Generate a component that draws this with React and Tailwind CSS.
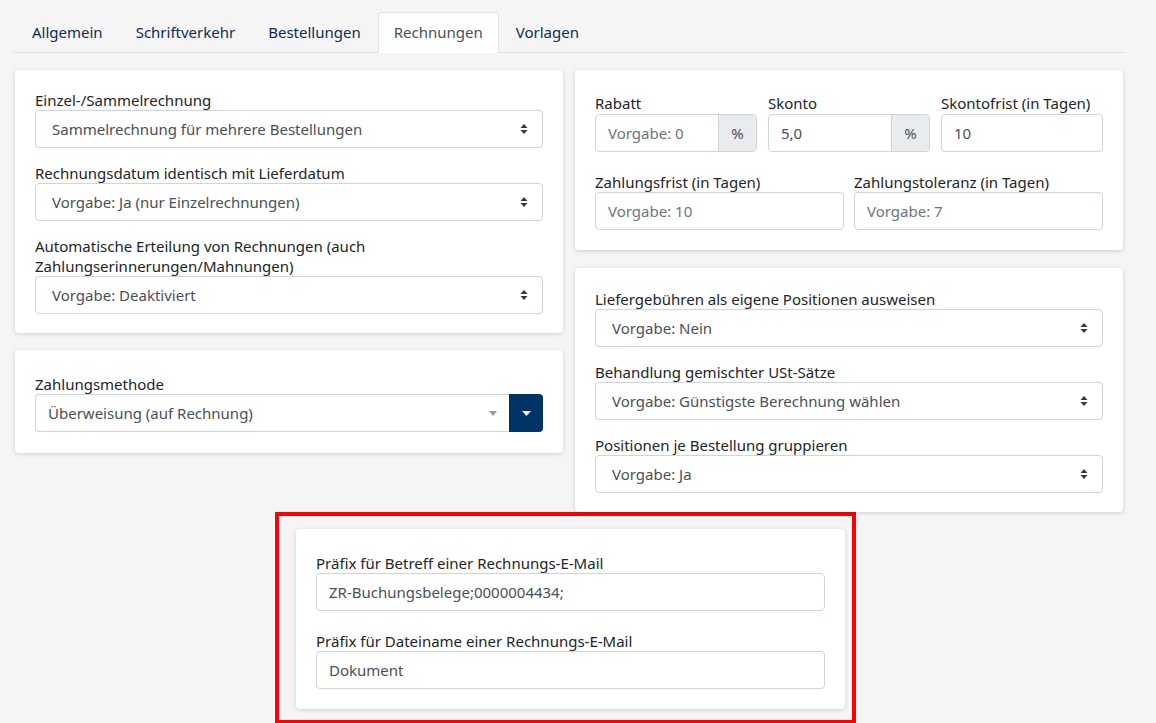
import React from "react";

const font = { fontFamily: '"Noto Sans", "Open Sans", sans-serif' };

function Chevrons() {
  return (
    <svg width="8" height="12" viewBox="0 0 8 12" className="shrink-0">
      <path d="M4 1 L7.5 5 L0.5 5 Z" fill="#343a40" />
      <path d="M4 11 L7.5 7 L0.5 7 Z" fill="#343a40" />
    </svg>
  );
}

function Field({ label, children, className = "" }) {
  return (
    <div className={className}>
      <div className="text-[15px] leading-[20px] text-[#212529]">{label}</div>
      {children}
    </div>
  );
}

function Select({ value }) {
  return (
    <div className="h-[38px] flex items-center justify-between border border-[#ced4da] rounded-[4px] bg-white pl-[16px] pr-[14px] text-[15px] text-[#495057]">
      <span>{value}</span>
      <Chevrons />
    </div>
  );
}

function Input({ value, placeholder, className = "" }) {
  return (
    <div className={"h-[38px] flex items-center border border-[#ced4da] rounded-[4px] bg-white px-[12px] text-[15px] " + className}>
      {value ? <span className="text-[#495057]">{value}</span> : <span className="text-[#6c757d]">{placeholder}</span>}
    </div>
  );
}

function PercentInput({ value, placeholder }) {
  return (
    <div className="h-[38px] mt-[1px] flex border border-[#ced4da] rounded-[4px] bg-white text-[15px] overflow-hidden">
      <div className="flex-1 flex items-center px-[12px]">
        {value ? <span className="text-[#495057]">{value}</span> : <span className="text-[#6c757d]">{placeholder}</span>}
      </div>
      <div className="w-[38px] flex items-center justify-center bg-[#e9ecef] border-l border-[#ced4da] text-[#495057]">%</div>
    </div>
  );
}

function Card({ children, className = "" }) {
  return (
    <div className={"bg-white rounded-[4px] shadow-[0_1px_4px_rgba(0,0,0,0.16)] " + className}>
      {children}
    </div>
  );
}

export default function App() {
  const tabs = ["Allgemein", "Schriftverkehr", "Bestellungen", "Rechnungen", "Vorlagen"];

  return (
    <div className="min-h-screen bg-[#f5f5f5] pl-[13px] pr-[31px] pt-[12px]" style={font}>
      {/* Reiter */}
      <div className="flex border-b border-[#dee2e6] pl-[3px] gap-[1px]">
        {tabs.map((t) =>
          t === "Rechnungen" ? (
            <div
              key={t}
              className="h-[41px] -mb-px flex items-center px-[15px] bg-white border border-[#dee2e6] border-b-white rounded-t-[4px] text-[15px] text-[#495057]"
            >
              {t}
            </div>
          ) : (
            <div key={t} className="h-[41px] -mb-px flex items-center px-[15px] border border-transparent text-[15px] text-[#0b2d5b]">
              {t}
            </div>
          )
        )}
      </div>

      {/* Karten */}
      <div className="grid grid-cols-2 gap-x-[12px] px-[2px] mt-[17px] items-start">
        <div className="flex flex-col gap-[17px]">
          <Card className="px-[20px] pt-[20px] pb-[19px] flex flex-col gap-[15px]">
            <Field label="Einzel-/Sammelrechnung">
              <Select value="Sammelrechnung für mehrere Bestellungen" />
            </Field>
            <Field label="Rechnungsdatum identisch mit Lieferdatum">
              <Select value="Vorgabe: Ja (nur Einzelrechnungen)" />
            </Field>
            <Field label={<>Automatische Erteilung von Rechnungen (auch<br />Zahlungserinnerungen/Mahnungen)</>}>
              <Select value="Vorgabe: Deaktiviert" />
            </Field>
          </Card>

          <Card className="px-[20px] pt-[24px] pb-[21px]">
            <Field label="Zahlungsmethode">
              <div className="h-[38px] flex">
                <div className="flex-1 flex items-center justify-between border border-[#ced4da] border-r-0 rounded-l-[4px] bg-white pl-[12px] pr-[12px] text-[15px] text-[#495057]">
                  <span>Überweisung (auf Rechnung)</span>
                  <svg width="8" height="5" viewBox="0 0 8 5">
                    <path d="M0 0 L8 0 L4 5 Z" fill="#999" />
                  </svg>
                </div>
                <div className="w-[34px] flex items-center justify-center bg-[#003366] rounded-r-[4px]">
                  <svg width="9" height="5" viewBox="0 0 9 5">
                    <path d="M0 0 L9 0 L4.5 5 Z" fill="#fff" />
                  </svg>
                </div>
              </div>
            </Field>
          </Card>
        </div>

        <div className="flex flex-col gap-[18px]">
          <Card className="px-[20px] pt-[23px] pb-[20px]">
            <div className="grid grid-cols-3 gap-x-[11px]">
              <Field label="Rabatt">
                <PercentInput placeholder="Vorgabe: 0" />
              </Field>
              <Field label="Skonto">
                <PercentInput value="5,0" />
              </Field>
              <Field label="Skontofrist (in Tagen)">
                <Input value="10" className="mt-[1px]" />
              </Field>
            </div>
            <div className="grid grid-cols-2 gap-x-[10px] mt-[20px]">
              <Field label="Zahlungsfrist (in Tagen)">
                <Input placeholder="Vorgabe: 10" />
              </Field>
              <Field label="Zahlungstoleranz (in Tagen)">
                <Input placeholder="Vorgabe: 7" />
              </Field>
            </div>
          </Card>

          <Card className="px-[20px] pt-[21px] pb-[19px] flex flex-col gap-[15px]">
            <Field label="Liefergebühren als eigene Positionen ausweisen">
              <Select value="Vorgabe: Nein" />
            </Field>
            <Field label="Behandlung gemischter USt-Sätze">
              <Select value="Vorgabe: Günstigste Berechnung wählen" />
            </Field>
            <Field label="Positionen je Bestellung gruppieren">
              <Select value="Vorgabe: Ja" />
            </Field>
          </Card>
        </div>
      </div>

      {/* markierter Bereich */}
      <div className="ml-[262px] w-[581px] border-4 border-[#ff0000] pt-[13px] pl-[17px] pr-[7px] pb-[11px]">
        <Card className="px-[20px] pt-[24px] pb-[20px] flex flex-col gap-[20px]">
          <Field label="Präfix für Betreff einer Rechnungs-E-Mail">
            <Input value="ZR-Buchungsbelege;0000004434;" />
          </Field>
          <Field label="Präfix für Dateiname einer Rechnungs-E-Mail">
            <Input value="Dokument" />
          </Field>
        </Card>
      </div>
    </div>
  );
}
